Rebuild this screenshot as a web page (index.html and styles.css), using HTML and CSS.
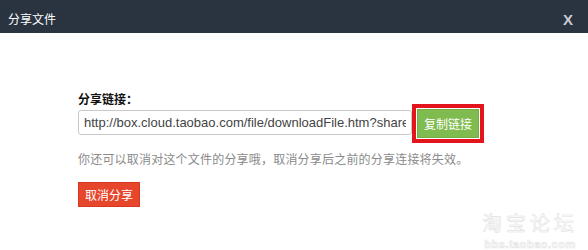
FILE: index.html
```html
<!DOCTYPE html>
<html lang="zh-CN">
<head>
<meta charset="utf-8">
<title>分享文件</title>
<link rel="stylesheet" href="styles.css">
</head>
<body>
<div class="dialog">
  <div class="header">
    <span class="title">分享文件</span>
    <span class="close">X</span>
  </div>
  <div class="content">
    <div class="label">分享链接：</div>
    <div class="row">
      <input class="link" type="text" readonly value="http://box.cloud.taobao.com/file/downloadFile.htm?shareId=a8f3c2">
      <button class="btn-copy">复制链接</button>
    </div>
    <div class="desc">你还可以取消对这个文件的分享哦，取消分享后之前的分享连接将失效。</div>
    <button class="btn-cancel">取消分享</button>
  </div>
  <div class="watermark">
    <div class="wm-cn">淘宝论坛</div>
    <div class="wm-en">bbs.taobao.com</div>
  </div>
</div>
</body>
</html>
```
FILE: styles.css
```css
html, body {
  margin: 0;
  padding: 0;
  background: #ffffff;
}
body {
  font-family: "Noto Sans CJK SC", "Liberation Sans", sans-serif;
  font-size: 12px;
}
.dialog {
  position: relative;
  width: 588px;
  height: 250px;
  overflow: hidden;
  background: #ffffff;
}
.header {
  height: 33px;
  box-sizing: border-box;
  border-top: 2px solid #2c3440;
  background: #293440;
  display: flex;
  align-items: center;
  justify-content: space-between;
  padding: 2px 15px 0 8px;
}
.title {
  color: #ffffff;
  font-size: 12px;
  line-height: 16px;
}
.close {
  color: #c9cdd2;
  font-family: "Liberation Sans", Arial, sans-serif;
  font-weight: bold;
  font-size: 15px;
  line-height: 16px;
  margin-top: 3px;
}
.content {
  padding: 58px 0 0 78px;
}
.label {
  font-weight: bold;
  color: #111111;
  line-height: 16px;
  margin-bottom: 2px;
}
.row {
  display: flex;
  align-items: flex-start;
}
.link {
  box-sizing: border-box;
  width: 334px;
  height: 25px;
  margin: 1px 0 0 0;
  padding: 0 5px;
  border: 1px solid #c9c9c9;
  border-radius: 3px;
  font-family: "Liberation Sans", Arial, sans-serif;
  font-size: 13px;
  color: #444444;
  background: #ffffff;
  outline: none;
}
.btn-copy {
  box-sizing: border-box;
  margin-left: 5px;
  width: 62px;
  height: 29px;
  padding: 0;
  border: 1px solid #74ad45;
  background: #7fbb4f;
  color: #ffffff;
  font-family: "Noto Sans CJK SC", sans-serif;
  font-size: 12px;
  outline: 4px solid #e3141c;
  outline-offset: 1px;
}
.desc {
  margin-top: 13px;
  color: #8a8a8a;
  line-height: 16px;
  letter-spacing: 0.2px;
}
.btn-cancel {
  display: block;
  box-sizing: border-box;
  margin-top: 15px;
  width: 62px;
  height: 25px;
  padding: 0;
  border: 1px solid #d7381f;
  background: #e6462c;
  color: #ffffff;
  font-family: "Noto Sans CJK SC", sans-serif;
  font-size: 12px;
}
.watermark {
  position: absolute;
  right: 10px;
  bottom: 0;
  text-align: center;
  color: #ffffff;
  -webkit-text-stroke: 0.6px #e2e2e2;
}
.wm-cn {
  font-family: "Noto Sans CJK SC", sans-serif;
  font-size: 20px;
  line-height: 24px;
  letter-spacing: 4px;
}
.wm-en {
  font-family: "Liberation Sans", Arial, sans-serif;
  font-size: 11px;
  font-weight: bold;
  line-height: 12px;
  letter-spacing: 0.5px;
  margin-top: 3px;
}
```
